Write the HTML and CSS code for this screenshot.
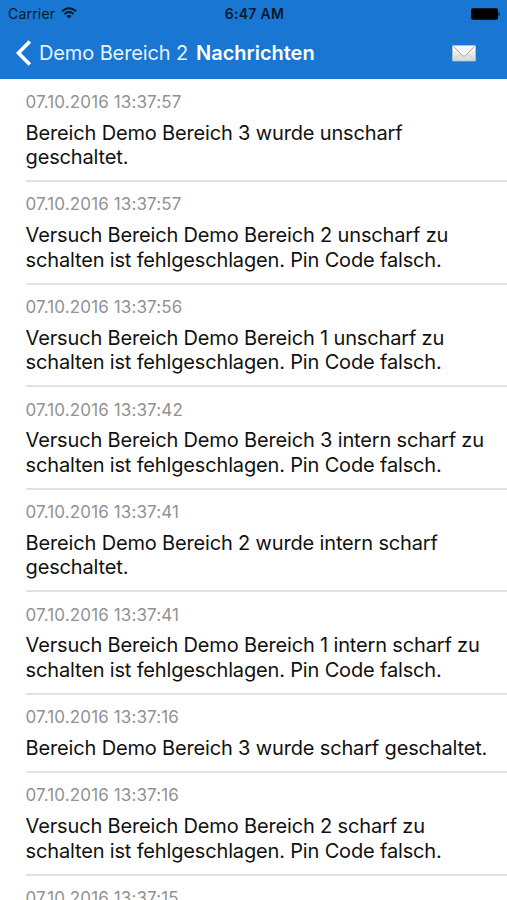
FILE: index.html
```html
<!DOCTYPE html>
<html lang="de">
<head>
<meta charset="utf-8">
<title>Nachrichten</title>
<link rel="stylesheet" href="styles.css">
</head>
<body>
<header class="top">
  <div class="status">
    <div class="carrier"><span class="carrier-name">Carrier</span>
      <svg class="wifi" width="16" height="12" viewBox="0 0 16 12"><g fill="none" stroke="#06182b" stroke-width="1.9"><path d="M1 4.2Q8-1.8 15 4.2"/><path d="M3.500 7Q8 3.200 12.500 7"/></g><path d="M5.500 9Q8 7 10.500 9L8 11.500Z" fill="#06182b"/></svg>
    </div>
    <span class="time">6:47 AM</span>
    <svg class="battery" width="31" height="12" viewBox="0 0 31 12"><rect x="1" y="0.2" width="27" height="11.500" rx="1.800" fill="#000"/><path d="M28.700 4q2.200 2 0 4z" fill="#000"/></svg>
  </div>
  <nav class="nav">
    <svg class="chevron" width="17" height="26" viewBox="0 0 17 26"><path d="M14.800 1.500L3.500 13l11.300 11.500" fill="none" stroke="#fff" stroke-width="3.700"/></svg>
    <span class="back">Demo Bereich 2</span>
    <h1 class="title">Nachrichten</h1>
    <svg class="mail" width="24" height="17" viewBox="0 0 24 17">
      <defs><linearGradient id="paper" x1="0" y1="0" x2="0" y2="1"><stop offset="0" stop-color="#fff"/><stop offset="1" stop-color="#d6d6d6"/></linearGradient></defs>
      <rect x=".5" y=".5" width="23" height="15.500" rx=".6" fill="url(#paper)" stroke="#c3c1bf" stroke-width=".8"/>
      <path d="M1.500 15l8-7M22.500 15l-8-7" fill="none" stroke="#ccc" stroke-width=".7"/>
      <path d="M1.500 1.300L11 11q1 1 2 0L22.500 1.300" fill="#f6f6f6" stroke="#aaa" stroke-width="1"/>
    </svg>
  </nav>
</header>
<main class="list">
  <article class="item"><time class="date">07.10.2016 13:37:57</time><p class="msg"><span class="line">Bereich Demo Bereich 3 wurde unscharf</span><span class="line">geschaltet.</span></p></article>
  <article class="item"><time class="date">07.10.2016 13:37:57</time><p class="msg"><span class="line">Versuch Bereich Demo Bereich 2 unscharf zu</span><span class="line">schalten ist fehlgeschlagen. Pin Code falsch.</span></p></article>
  <article class="item"><time class="date">07.10.2016 13:37:56</time><p class="msg"><span class="line">Versuch Bereich Demo Bereich 1 unscharf zu</span><span class="line">schalten ist fehlgeschlagen. Pin Code falsch.</span></p></article>
  <article class="item"><time class="date">07.10.2016 13:37:42</time><p class="msg"><span class="line">Versuch Bereich Demo Bereich 3 intern scharf zu</span><span class="line">schalten ist fehlgeschlagen. Pin Code falsch.</span></p></article>
  <article class="item"><time class="date">07.10.2016 13:37:41</time><p class="msg"><span class="line">Bereich Demo Bereich 2 wurde intern scharf</span><span class="line">geschaltet.</span></p></article>
  <article class="item"><time class="date">07.10.2016 13:37:41</time><p class="msg"><span class="line">Versuch Bereich Demo Bereich 1 intern scharf zu</span><span class="line">schalten ist fehlgeschlagen. Pin Code falsch.</span></p></article>
  <article class="item"><time class="date">07.10.2016 13:37:16</time><p class="msg"><span class="line">Bereich Demo Bereich 3 wurde scharf geschaltet.</span></p></article>
  <article class="item"><time class="date">07.10.2016 13:37:16</time><p class="msg"><span class="line">Versuch Bereich Demo Bereich 2 scharf zu</span><span class="line">schalten ist fehlgeschlagen. Pin Code falsch.</span></p></article>
  <article class="item"><time class="date">07.10.2016 13:37:15</time></article>
</main>
</body>
</html>
```

FILE: styles.css
```css
* { box-sizing: border-box; }
body { margin: 0; height: 900px; overflow: hidden; background: #fff; color: #111; font-family: Inter, "Liberation Sans", sans-serif; }
.top { height: 79px; background: #1976d2; }
.status { height: 27px; display: grid; grid-template-columns: 1fr auto 1fr; align-items: center; padding: 0 6px 0 8px; font-size: 14px; color: #06182b; }
.carrier { display: flex; align-items: center; gap: 6px; }
.carrier-name { letter-spacing: 0.2px; }
.wifi { margin-top: -2px; }
.time { font-weight: 600; letter-spacing: 0.3px; }
.battery { justify-self: end; }
.nav { height: 52px; display: flex; align-items: center; padding: 0 31px 0 15px; color: #fff; }
.back { margin-left: 7px; font-size: 20px; letter-spacing: -0.12px; color: #e6f2ff; }
.title { margin: 0 0 0 8px; font-size: 20px; font-weight: 600; letter-spacing: -0.02px; }
.mail { margin-left: auto; }
.list { padding: 0.4px 0 0 25.6px; }
.item { padding: 12.4px 0 10.4px; border-bottom: 2px solid #e2e2e2; }
.date { display: block; font-size: 17px; line-height: 21px; letter-spacing: 0.13px; color: #929292; }
.msg { margin: 7.8px 0 0; font-size: 20px; line-height: 24.5px; letter-spacing: -0.16px; }
.line { display: block; white-space: nowrap; }
```
